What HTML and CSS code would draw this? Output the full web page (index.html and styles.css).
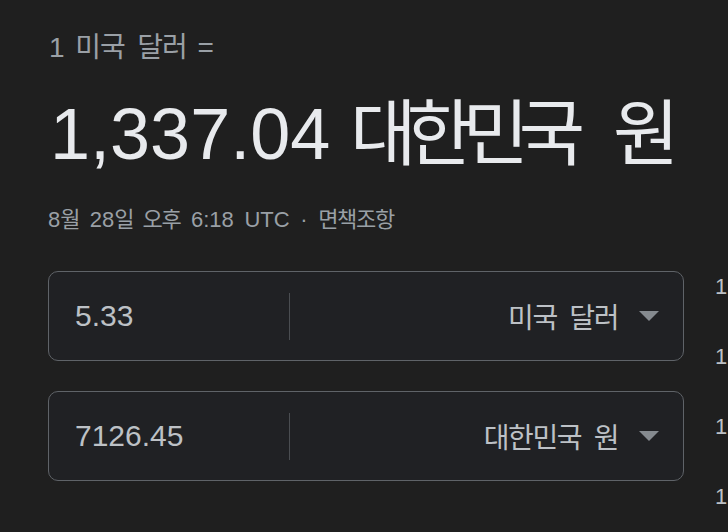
FILE: index.html
```html
<!DOCTYPE html>
<html lang="ko">
<head>
  <meta charset="UTF-8">
  <meta name="viewport" content="width=device-width, initial-scale=1.0">
  <title>환율</title>
  <link rel="stylesheet" href="styles.css">
</head>
<body>
  <div class="page">
    <div class="main">
      <div class="rate-label">1 <span class="ko">미국 달러</span> =</div>
      <div class="rate-value">1,337.04 <span class="ko">대한민국 원</span></div>
      <div class="rate-meta">8<span class="ko">월</span> 28<span class="ko">일 오후</span> 6:18 UTC · <a href="#" class="disclaimer ko">면책조항</a></div>

      <div class="converter">
        <div class="field">
          <input type="text" class="amount" value="5.33" aria-label="미국 달러 금액">
          <span class="divider"></span>
          <div class="currency">
            <span class="ko">미국 달러</span>
            <svg class="caret" width="20" height="10" viewBox="0 0 20 10"><path d="M0 0h20L10 10z"/></svg>
          </div>
        </div>
        <div class="field">
          <input type="text" class="amount" value="7126.45" aria-label="대한민국 원 금액">
          <span class="divider"></span>
          <div class="currency">
            <span class="ko">대한민국 원</span>
            <svg class="caret" width="20" height="10" viewBox="0 0 20 10"><path d="M0 0h20L10 10z"/></svg>
          </div>
        </div>
      </div>
    </div>

    <ul class="side">
      <li>1</li>
      <li>1</li>
      <li>1</li>
      <li>1</li>
    </ul>
  </div>
</body>
</html>
```

FILE: styles.css
```css
html,
body {
  margin: 0;
  height: 100%;
  overflow: hidden;
}

body {
  background-color: #1f1f1f;
  color: #e8eaed;
  font-family: "Liberation Sans", Arial, "Noto Sans CJK KR", sans-serif;
}

.page {
  display: flex;
  padding-left: 48px;
}

.main {
  width: 636px;
  flex: none;
}

/* Korean glyphs are set a little tighter */
.ko {
  font-family: "Noto Sans CJK KR", sans-serif;
  letter-spacing: -0.08em;
}

.rate-label {
  margin-top: 30px;
  padding-left: 1px;
  font-size: 28px;
  line-height: 30px;
  word-spacing: 3px;
  color: #9aa0a6;
}

.rate-label .ko {
  letter-spacing: -0.04em;
  word-spacing: 6px;
}

.rate-value {
  margin-top: 25px;
  padding-left: 2px;
  font-size: 72px;
  line-height: 80px;
  color: #e8eaed;
  white-space: nowrap;
}

.rate-value .ko {
  letter-spacing: -0.14em;
  word-spacing: 28px;
}

.rate-meta {
  margin-top: 30px;
  font-size: 22px;
  line-height: 26px;
  word-spacing: 4.5px;
  color: #9aa0a6;
}

.rate-meta .ko {
  letter-spacing: -0.06em;
}

.disclaimer {
  color: #9aa0a6;
  text-decoration: none;
}

.converter {
  display: flex;
  flex-direction: column;
  gap: 30px;
  margin-top: 38px;
}

.field {
  display: flex;
  align-items: center;
  height: 90px;
  box-sizing: border-box;
  border: 1px solid #5f6368;
  border-radius: 10px;
  background-color: #202124;
}

.amount {
  width: 214px;
  padding: 0 0 0 26px;
  border: none;
  outline: none;
  background: transparent;
  color: #bdc1c6;
  font-family: "Liberation Sans", Arial, sans-serif;
  font-size: 30px;
}

.divider {
  width: 1px;
  height: 47px;
  background-color: #4a4d51;
}

.currency {
  flex: 1;
  display: flex;
  align-items: center;
  justify-content: flex-end;
  gap: 21px;
  padding-right: 24px;
  font-size: 28px;
  color: #bdc1c6;
}

.currency .ko {
  letter-spacing: -0.05em;
  word-spacing: 6px;
}

.caret {
  fill: #858a8f;
}

.side {
  list-style: none;
  margin: 252px 0 0 31px;
  padding: 0;
  font-size: 22px;
  line-height: 70px;
  color: #bdc1c6;
}
```
